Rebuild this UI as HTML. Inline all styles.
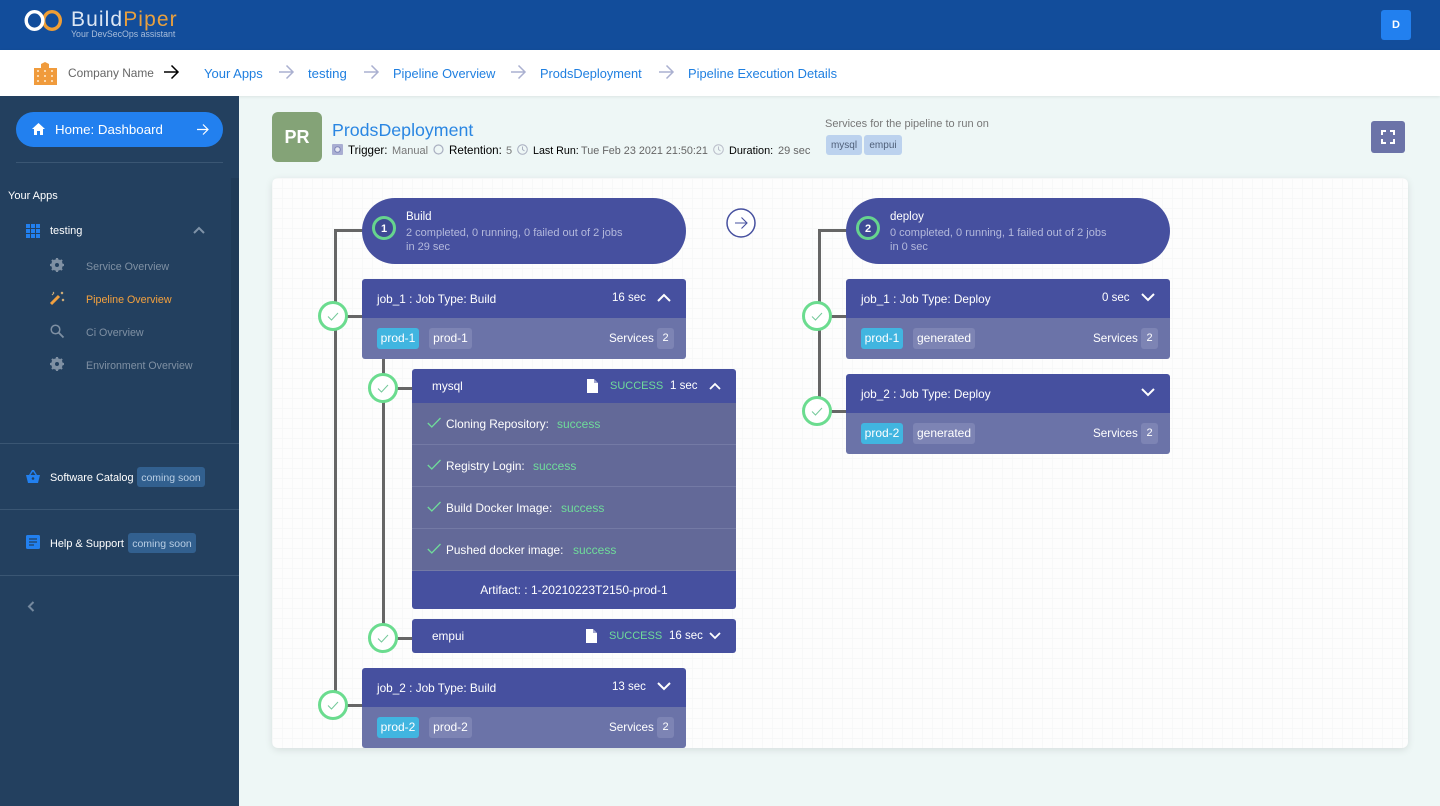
<!DOCTYPE html>
<html>
<head>
<meta charset="utf-8">
<title>BuildPiper</title>
<style>
*{box-sizing:border-box;margin:0;padding:0}
html,body{width:1440px;height:806px;overflow:hidden;background:#eef7f6;font-family:"Liberation Sans",sans-serif;font-size:12px;color:#000}
.a{position:absolute;white-space:nowrap}
svg{position:absolute;overflow:visible}
.bl{color:#1f7fe0;font-size:12.8px}
.nv{background:#46509f;position:absolute}
.lt{background:#6b73a8;position:absolute}
.w{color:#fff}
.tag{position:absolute;height:21px;line-height:21px;border-radius:3px;color:#fff;font-size:12px;text-align:center}
.line{position:absolute;background:#666}
.succ{color:#6fdc9a}
</style>
</head>
<body>
<!-- top bar -->
<div class="a" style="left:0;top:0;width:1440px;height:50px;background:#124d9b"></div>
<svg style="left:24px;top:10px" width="38" height="21" viewBox="0 0 38 21"><ellipse cx="28" cy="10.500" rx="8.300" ry="8.800" fill="none" stroke="#ef9e35" stroke-width="3.400"/><ellipse cx="10.500" cy="10.500" rx="8.300" ry="8.800" fill="none" stroke="#fff" stroke-width="3.400"/></svg>
<div class="a" style="left:71px;top:8px;font-size:21px;line-height:24px;color:#dbe6f3;letter-spacing:1.100px">Build<span style="color:#e8a03f">Piper</span></div>
<div class="a" style="left:71px;top:29px;font-size:8.800px;line-height:11px;color:#a9bedb">Your DevSecOps assistant</div>
<div class="a" style="left:1381px;top:10px;width:30px;height:30px;background:#2280ef;border-radius:3px;color:#fff;font-weight:bold;font-size:11px;line-height:31px;text-align:center">D</div>

<!-- breadcrumb -->
<div class="a" style="left:0;top:50px;width:1440px;height:46px;background:#fff;box-shadow:0 1px 3px rgba(0,0,0,.08)"></div>
<svg style="left:34px;top:62px" width="23" height="23" viewBox="0 0 23 23"><path fill="#f09b3c" d="M0 6h7V2l4-2 4 2v4h8v17H0z"/><g fill="#fcd9ad"><rect x="3" y="8" width="2" height="2"/><rect x="10" y="8" width="2" height="2"/><rect x="17" y="8" width="2" height="2"/><rect x="3" y="13" width="2" height="2"/><rect x="10" y="13" width="2" height="2"/><rect x="17" y="13" width="2" height="2"/><rect x="3" y="18" width="2" height="2"/><rect x="10" y="18" width="2" height="2"/><rect x="17" y="18" width="2" height="2"/></g></svg>
<div class="a" style="left:68px;top:66px;font-size:11.900px;line-height:15px;color:#666">Company Name</div>
<svg style="left:163px;top:64px" width="16" height="16" viewBox="0 0 16 16"><path d="M1 8h14M8.500 1.500 15 8l-6.500 6.500" fill="none" stroke="#000" stroke-width="1.500"/></svg>
<div class="a bl" style="left:204px;top:66px;line-height:15px;font-size:13px">Your Apps</div>
<svg style="left:278px;top:64px" width="16" height="16" viewBox="0 0 16 16"><path d="M1 8h14M8.500 1.500 15 8l-6.500 6.500" fill="none" stroke="#aab0d0" stroke-width="1.500"/></svg>
<div class="a bl" style="left:308px;top:66px;line-height:15px;font-size:13.200px">testing</div>
<svg style="left:363px;top:64px" width="16" height="16" viewBox="0 0 16 16"><path d="M1 8h14M8.500 1.500 15 8l-6.500 6.500" fill="none" stroke="#aab0d0" stroke-width="1.500"/></svg>
<div class="a bl" style="left:393px;top:66px;line-height:15px;font-size:12.800px">Pipeline Overview</div>
<svg style="left:510px;top:64px" width="16" height="16" viewBox="0 0 16 16"><path d="M1 8h14M8.500 1.500 15 8l-6.500 6.500" fill="none" stroke="#aab0d0" stroke-width="1.500"/></svg>
<div class="a bl" style="left:540px;top:66px;line-height:15px;font-size:12.800px">ProdsDeployment</div>
<svg style="left:658px;top:64px" width="16" height="16" viewBox="0 0 16 16"><path d="M1 8h14M8.500 1.500 15 8l-6.500 6.500" fill="none" stroke="#aab0d0" stroke-width="1.500"/></svg>
<div class="a bl" style="left:688px;top:66px;line-height:15px;font-size:12.900px">Pipeline Execution Details</div>

<!-- sidebar -->
<div class="a" style="left:0;top:96px;width:239px;height:710px;background:#23405f"></div>
<div class="a" style="left:231px;top:178px;width:8px;height:252px;background:#203b58"></div>
<div class="a" style="left:16px;top:112px;width:207px;height:35px;background:#2280ef;border-radius:18px"></div>
<svg style="left:31px;top:122px" width="15" height="14" viewBox="0 0 15 14"><path fill="#fff" d="M7.500 1 14 7h-2v6H9V9H6v4H3V7H1z"/></svg>
<div class="a w" style="left:55px;top:122px;font-size:13.300px;line-height:15px">Home: Dashboard</div>
<svg style="left:196px;top:123px" width="13" height="13" viewBox="0 0 13 13"><path d="M1 6.500h11M7 1.500l5 5-5 5" fill="none" stroke="#fff" stroke-width="1.200"/></svg>
<div class="a" style="left:16px;top:162px;width:207px;height:1px;background:#3a5673"></div>
<div class="a w" style="left:8px;top:190px;font-size:11px;line-height:13px">Your Apps</div>
<svg style="left:26px;top:224px" width="14" height="14" viewBox="0 0 14 14" fill="#2280ef"><rect width="4" height="4"/><rect x="5" width="4" height="4"/><rect x="10" width="4" height="4"/><rect y="5" width="4" height="4"/><rect x="5" y="5" width="4" height="4"/><rect x="10" y="5" width="4" height="4"/><rect y="10" width="4" height="4"/><rect x="5" y="10" width="4" height="4"/><rect x="10" y="10" width="4" height="4"/></svg>
<div class="a w" style="left:50px;top:225px;font-size:11px;line-height:13px">testing</div>
<svg style="left:193px;top:226px" width="12" height="8" viewBox="0 0 12 8"><path d="M1 7l5-5 5 5" fill="none" stroke="#7f93a8" stroke-width="2"/></svg>
<svg style="left:50px;top:258px" width="14" height="14" viewBox="0 0 14 14"><circle cx="7" cy="7" r="4.200" fill="none" stroke="#7f90a3" stroke-width="3.200"/><path d="M7 0v14M0 7h14M2 2l10 10M12 2 2 12" stroke="#7f90a3" stroke-width="2.200"/><circle cx="7" cy="7" r="2" fill="#23405f"/></svg>
<div class="a" style="left:86px;top:261px;font-size:10.700px;line-height:13px;color:#7f90a3">Service Overview</div>
<svg style="left:50px;top:291px" width="14" height="14" viewBox="0 0 14 14"><path d="M1 13 9 5" stroke="#f0a040" stroke-width="3"/><path d="M3 1l1 1M11 1l2 2M13 1l-2 2M2 4l2-2M12 8l2 2M14 8l-2 2" stroke="#d8b27a" stroke-width="1"/></svg>
<div class="a" style="left:86px;top:294px;font-size:10.700px;line-height:13px;color:#f4a13e">Pipeline Overview</div>
<svg style="left:50px;top:324px" width="14" height="14" viewBox="0 0 14 14"><circle cx="5.500" cy="5.500" r="4.300" fill="none" stroke="#7f90a3" stroke-width="1.500"/><path d="M8.800 8.800 13.500 13.500" stroke="#7f90a3" stroke-width="1.800"/></svg>
<div class="a" style="left:86px;top:327px;font-size:10.700px;line-height:13px;color:#7f90a3">Ci Overview</div>
<svg style="left:50px;top:357px" width="14" height="14" viewBox="0 0 14 14"><circle cx="7" cy="7" r="4.200" fill="none" stroke="#7f90a3" stroke-width="3.200"/><path d="M7 0v14M0 7h14M2 2l10 10M12 2 2 12" stroke="#7f90a3" stroke-width="2.200"/><circle cx="7" cy="7" r="2" fill="#23405f"/></svg>
<div class="a" style="left:86px;top:360px;font-size:10.600px;line-height:13px;color:#7f90a3">Environment Overview</div>
<div class="a" style="left:0;top:443px;width:239px;height:1px;background:#3a5673"></div>
<svg style="left:26px;top:470px" width="14" height="13" viewBox="0 0 14 13"><path fill="#2280ef" d="M0 5h3l3-5h2l3 5h3l-2 8H2z"/><path fill="#23405f" d="M4.500 5 7 1.500 9.500 5z"/><circle cx="7" cy="8.500" r="1.300" fill="#23405f"/></svg>
<div class="a w" style="left:50px;top:472px;font-size:10.900px;line-height:13px">Software Catalog</div>
<div class="a" style="left:137px;top:467px;width:68px;height:20px;line-height:22px;background:#32608f;border-radius:3px;color:#b9cee4;font-size:10.500px;text-align:center">coming soon</div>
<div class="a" style="left:0;top:509px;width:239px;height:1px;background:#3a5673"></div>
<svg style="left:26px;top:535px" width="14" height="14" viewBox="0 0 14 14"><rect width="14" height="14" rx="1.500" fill="#2280ef"/><path d="M3 4h8M3 7h8M3 10h5" stroke="#23405f" stroke-width="1.200"/></svg>
<div class="a w" style="left:50px;top:538px;font-size:10.900px;line-height:13px">Help &amp; Support</div>
<div class="a" style="left:128px;top:533px;width:68px;height:20px;line-height:22px;background:#32608f;border-radius:3px;color:#b9cee4;font-size:10.500px;text-align:center">coming soon</div>
<div class="a" style="left:0;top:575px;width:239px;height:1px;background:#3a5673"></div>
<svg style="left:27px;top:601px" width="8" height="11" viewBox="0 0 8 11"><path d="M6.500 1 2 5.500 6.500 10" fill="none" stroke="#75899e" stroke-width="2"/></svg>

<!-- page header -->
<div class="a" style="left:272px;top:112px;width:50px;height:50px;border-radius:6px;background:#84a377;color:#fff;font-weight:bold;font-size:18px;line-height:50px;text-align:center">PR</div>
<div class="a" style="left:332px;top:119px;font-size:17.800px;line-height:22px;color:#2a86e2">ProdsDeployment</div>
<svg style="left:332px;top:144px" width="11" height="11" viewBox="0 0 11 11"><rect width="11" height="11" rx="1" fill="#a9aed2"/><circle cx="5.500" cy="5.500" r="2.800" fill="#e6e8f2" stroke="#7e86b8"/></svg>
<div class="a" style="left:348px;top:144px;font-size:11.600px;line-height:14px">Trigger:</div>
<div class="a" style="left:392px;top:144px;font-size:11px;line-height:14px;color:#777">Manual</div>
<svg style="left:433px;top:144px" width="11" height="11" viewBox="0 0 11 11"><circle cx="5.500" cy="5.500" r="4.500" fill="none" stroke="#a9afc0" stroke-width="1.200"/></svg>
<div class="a" style="left:449px;top:144px;font-size:11.600px;line-height:14px">Retention:</div>
<div class="a" style="left:506px;top:144px;font-size:11px;line-height:14px;color:#777">5</div>
<svg style="left:517px;top:144px" width="11" height="11" viewBox="0 0 11 11"><circle cx="5.500" cy="5.500" r="4.800" fill="none" stroke="#a9afc0"/><path d="M5.500 2.500v3l2 1.500" fill="none" stroke="#a9afc0"/></svg>
<div class="a" style="left:533px;top:144px;font-size:10.700px;line-height:14px">Last Run:</div>
<div class="a" style="left:581px;top:144px;font-size:10.800px;line-height:14px;color:#666">Tue Feb 23 2021 21:50:21</div>
<svg style="left:713px;top:144px" width="11" height="11" viewBox="0 0 11 11"><circle cx="5.500" cy="5.500" r="4.800" fill="none" stroke="#b9bdc9"/><path d="M5.500 2.500v3l2 1.500" fill="none" stroke="#b9bdc9"/></svg>
<div class="a" style="left:729px;top:144px;font-size:10.900px;line-height:14px">Duration:</div>
<div class="a" style="left:778px;top:144px;font-size:11px;line-height:14px;color:#666">29 sec</div>
<div class="a" style="left:825px;top:118px;font-size:11px;line-height:13px;color:#777">Services for the pipeline to run on</div>
<div class="a" style="left:826px;top:135px;width:36px;height:20px;line-height:22px;background:#bcd2ee;border-radius:3px;color:#50607a;font-size:10px;text-align:center">mysql</div>
<div class="a" style="left:864px;top:135px;width:38px;height:20px;line-height:22px;background:#bcd2ee;border-radius:3px;color:#50607a;font-size:10px;text-align:center">empui</div>
<div class="a" style="left:1371px;top:121px;width:34px;height:32px;background:#6b73a8;border-radius:3px"></div>
<svg style="left:1381px;top:130px" width="14" height="14" viewBox="0 0 14 14"><path d="M1 5V1h4M9 1h4v4M13 9v4H9M5 13H1V9" fill="none" stroke="#fff" stroke-width="2"/></svg>

<!-- canvas card -->
<div class="a" style="left:272px;top:178px;width:1136px;height:570px;border-radius:6px;background-color:#fdfdfd;background-image:linear-gradient(#f7f8f8 1px,transparent 1px),linear-gradient(90deg,#f7f8f8 1px,transparent 1px);background-size:10px 10px;box-shadow:0 2px 8px rgba(0,0,0,.1)"></div>

<!-- connector lines -->
<div class="line" style="left:334px;top:229px;width:3px;height:477px"></div>
<div class="line" style="left:334px;top:229px;width:30px;height:3px"></div>
<div class="line" style="left:347px;top:315px;width:16px;height:3px"></div>
<div class="line" style="left:347px;top:704px;width:16px;height:3px"></div>
<div class="line" style="left:382px;top:358px;width:3px;height:280px"></div>
<div class="line" style="left:397px;top:387px;width:16px;height:3px"></div>
<div class="line" style="left:397px;top:637px;width:16px;height:3px"></div>
<div class="line" style="left:818px;top:229px;width:3px;height:182px"></div>
<div class="line" style="left:818px;top:229px;width:30px;height:3px"></div>
<div class="line" style="left:831px;top:315px;width:16px;height:3px"></div>
<div class="line" style="left:831px;top:410px;width:16px;height:3px"></div>

<!-- check circles -->
<svg style="left:318px;top:301px" width="30" height="30" viewBox="0 0 30 30"><circle cx="15" cy="15" r="13.500" fill="#fff" stroke="#6bdc8f" stroke-width="3"/><path d="M10 15.500l3.500 3.500 6.500-7" fill="none" stroke="#74c99a" stroke-width="1"/></svg>
<svg style="left:318px;top:690px" width="30" height="30" viewBox="0 0 30 30"><circle cx="15" cy="15" r="13.500" fill="#fff" stroke="#6bdc8f" stroke-width="3"/><path d="M10 15.500l3.500 3.500 6.500-7" fill="none" stroke="#74c99a" stroke-width="1"/></svg>
<svg style="left:368px;top:373px" width="30" height="30" viewBox="0 0 30 30"><circle cx="15" cy="15" r="13.500" fill="#fff" stroke="#6bdc8f" stroke-width="3"/><path d="M10 15.500l3.500 3.500 6.500-7" fill="none" stroke="#74c99a" stroke-width="1"/></svg>
<svg style="left:368px;top:623px" width="30" height="30" viewBox="0 0 30 30"><circle cx="15" cy="15" r="13.500" fill="#fff" stroke="#6bdc8f" stroke-width="3"/><path d="M10 15.500l3.500 3.500 6.500-7" fill="none" stroke="#74c99a" stroke-width="1"/></svg>
<svg style="left:802px;top:301px" width="30" height="30" viewBox="0 0 30 30"><circle cx="15" cy="15" r="13.500" fill="#fff" stroke="#6bdc8f" stroke-width="3"/><path d="M10 15.500l3.500 3.500 6.500-7" fill="none" stroke="#74c99a" stroke-width="1"/></svg>
<svg style="left:802px;top:396px" width="30" height="30" viewBox="0 0 30 30"><circle cx="15" cy="15" r="13.500" fill="#fff" stroke="#6bdc8f" stroke-width="3"/><path d="M10 15.500l3.500 3.500 6.500-7" fill="none" stroke="#74c99a" stroke-width="1"/></svg>

<!-- stage 1 -->
<div class="nv" style="left:362px;top:198px;width:324px;height:66px;border-radius:33px"></div>
<svg style="left:372px;top:216px" width="24" height="24" viewBox="0 0 24 24"><circle cx="12" cy="12" r="10.500" fill="#3f4a95" stroke="#66d48e" stroke-width="3"/><text x="12" y="16" text-anchor="middle" font-family="Liberation Sans" font-weight="bold" font-size="11" fill="#fff">1</text></svg>
<div class="a w" style="left:406px;top:210px;font-size:11.500px;line-height:15px">Build</div>
<div class="a" style="left:406px;top:226px;font-size:11px;line-height:14px;color:#b4b9dc">2 completed, 0 running, 0 failed out of 2 jobs</div>
<div class="a" style="left:406px;top:240px;font-size:11px;line-height:14px;color:#b4b9dc">in 29 sec</div>

<svg style="left:726px;top:208px" width="30" height="30" viewBox="0 0 30 30"><circle cx="15" cy="15" r="14" fill="#fff" stroke="#46509f" stroke-width="1.500"/><path d="M9 15h12M15.500 9.500 21 15l-5.500 5.500" fill="none" stroke="#46509f" stroke-width="1.100"/></svg>

<!-- stage 2 -->
<div class="nv" style="left:846px;top:198px;width:324px;height:66px;border-radius:33px"></div>
<svg style="left:856px;top:216px" width="24" height="24" viewBox="0 0 24 24"><circle cx="12" cy="12" r="10.500" fill="#3f4a95" stroke="#66d48e" stroke-width="3"/><text x="12" y="16" text-anchor="middle" font-family="Liberation Sans" font-weight="bold" font-size="11" fill="#fff">2</text></svg>
<div class="a w" style="left:890px;top:210px;font-size:11.500px;line-height:15px">deploy</div>
<div class="a" style="left:890px;top:226px;font-size:11px;line-height:14px;color:#b4b9dc">0 completed, 0 running, 1 failed out of 2 jobs</div>
<div class="a" style="left:890px;top:240px;font-size:11px;line-height:14px;color:#b4b9dc">in 0 sec</div>

<!-- job_1 Build -->
<div class="nv" style="left:362px;top:279px;width:324px;height:40px;border-radius:3px 3px 0 0"></div>
<div class="lt" style="left:362px;top:318px;width:324px;height:41px;border-radius:0 0 3px 3px"></div>
<div class="a w" style="left:377px;top:292px;font-size:11.800px;line-height:15px">job_1 : Job Type: Build</div>
<div class="a w" style="left:612px;top:291px;font-size:11.500px;line-height:15px">16 sec</div>
<svg style="left:657px;top:293px" width="14" height="9" viewBox="0 0 14 9"><path d="M1 8l6-6 6 6" fill="none" stroke="#fff" stroke-width="2"/></svg>
<div class="tag" style="left:377px;top:328px;width:42px;background:#41b5e0">prod-1</div>
<div class="tag" style="left:429px;top:328px;width:43px;background:#7d84b4">prod-1</div>
<div class="a w" style="left:609px;top:331px;font-size:11.700px;line-height:15px">Services</div>
<div class="tag" style="left:657px;top:328px;width:17px;background:#7d84b4;font-size:11px">2</div>

<!-- mysql -->
<div class="nv" style="left:412px;top:369px;width:324px;height:35px;border-radius:3px 3px 0 0"></div>
<div class="a" style="left:412px;top:403px;width:324px;height:168px;background:#636998"></div>
<div class="a" style="left:412px;top:444px;width:324px;height:1px;background:#747aa5"></div>
<div class="a" style="left:412px;top:486px;width:324px;height:1px;background:#747aa5"></div>
<div class="a" style="left:412px;top:528px;width:324px;height:1px;background:#747aa5"></div>
<div class="a" style="left:412px;top:570px;width:324px;height:1px;background:#747aa5"></div>
<div class="nv" style="left:412px;top:571px;width:324px;height:38px;border-radius:0 0 3px 3px"></div>
<div class="a w" style="left:432px;top:379px;font-size:11.800px;line-height:15px">mysql</div>
<svg style="left:586px;top:379px" width="12" height="14" viewBox="0 0 12 14"><path fill="#fff" d="M1 0h7l4 4v10H1z"/><path fill="#46509f" d="M8 0v4h4z" opacity=".5"/></svg>
<div class="a succ" style="left:610px;top:379px;font-size:11px;line-height:15px">SUCCESS</div>
<div class="a w" style="left:670px;top:379px;font-size:11.500px;line-height:15px">1 sec</div>
<svg style="left:709px;top:382px" width="12" height="8" viewBox="0 0 12 8"><path d="M1 7l5-5 5 5" fill="none" stroke="#fff" stroke-width="1.800"/></svg>

<svg style="left:427px;top:417px" width="14" height="11" viewBox="0 0 14 11"><path d="M.8 6l4 4L13.500 1" fill="none" stroke="#6fdc9a" stroke-width="1.300"/></svg>
<div class="a w" style="left:446px;top:417px;font-size:11.800px;line-height:15px">Cloning Repository:</div>
<div class="a succ" style="left:557px;top:417px;font-size:12px;line-height:15px">success</div>
<svg style="left:427px;top:459px" width="14" height="11" viewBox="0 0 14 11"><path d="M.8 6l4 4L13.500 1" fill="none" stroke="#6fdc9a" stroke-width="1.300"/></svg>
<div class="a w" style="left:446px;top:459px;font-size:11.800px;line-height:15px">Registry Login:</div>
<div class="a succ" style="left:533px;top:459px;font-size:12px;line-height:15px">success</div>
<svg style="left:427px;top:501px" width="14" height="11" viewBox="0 0 14 11"><path d="M.8 6l4 4L13.500 1" fill="none" stroke="#6fdc9a" stroke-width="1.300"/></svg>
<div class="a w" style="left:446px;top:501px;font-size:11.800px;line-height:15px">Build Docker Image:</div>
<div class="a succ" style="left:561px;top:501px;font-size:12px;line-height:15px">success</div>
<svg style="left:427px;top:543px" width="14" height="11" viewBox="0 0 14 11"><path d="M.8 6l4 4L13.500 1" fill="none" stroke="#6fdc9a" stroke-width="1.300"/></svg>
<div class="a w" style="left:446px;top:543px;font-size:11.800px;line-height:15px">Pushed docker image:</div>
<div class="a succ" style="left:573px;top:543px;font-size:12px;line-height:15px">success</div>
<div class="a w" style="left:412px;top:583px;width:324px;text-align:center;font-size:12px;line-height:15px">Artifact: : 1-20210223T2150-prod-1</div>

<!-- empui -->
<div class="nv" style="left:412px;top:619px;width:324px;height:34px;border-radius:3px"></div>
<div class="a w" style="left:432px;top:629px;font-size:11.800px;line-height:15px">empui</div>
<svg style="left:585px;top:629px" width="12" height="14" viewBox="0 0 12 14"><path fill="#fff" d="M1 0h7l4 4v10H1z"/><path fill="#46509f" d="M8 0v4h4z" opacity=".5"/></svg>
<div class="a succ" style="left:609px;top:629px;font-size:11px;line-height:15px">SUCCESS</div>
<div class="a w" style="left:669px;top:629px;font-size:11.500px;line-height:15px">16 sec</div>
<svg style="left:709px;top:632px" width="12" height="8" viewBox="0 0 12 8"><path d="M1 1l5 5 5-5" fill="none" stroke="#fff" stroke-width="1.800"/></svg>

<!-- job_2 Build -->
<div class="nv" style="left:362px;top:668px;width:324px;height:40px;border-radius:3px 3px 0 0"></div>
<div class="lt" style="left:362px;top:707px;width:324px;height:41px;border-radius:0 0 3px 3px"></div>
<div class="a w" style="left:377px;top:681px;font-size:11.800px;line-height:15px">job_2 : Job Type: Build</div>
<div class="a w" style="left:612px;top:680px;font-size:11.500px;line-height:15px">13 sec</div>
<svg style="left:657px;top:682px" width="14" height="9" viewBox="0 0 14 9"><path d="M1 1l6 6 6-6" fill="none" stroke="#fff" stroke-width="2"/></svg>
<div class="tag" style="left:377px;top:717px;width:42px;background:#41b5e0">prod-2</div>
<div class="tag" style="left:429px;top:717px;width:43px;background:#7d84b4">prod-2</div>
<div class="a w" style="left:609px;top:720px;font-size:11.700px;line-height:15px">Services</div>
<div class="tag" style="left:657px;top:717px;width:17px;background:#7d84b4;font-size:11px">2</div>

<!-- job_1 Deploy -->
<div class="nv" style="left:846px;top:279px;width:324px;height:40px;border-radius:3px 3px 0 0"></div>
<div class="lt" style="left:846px;top:318px;width:324px;height:41px;border-radius:0 0 3px 3px"></div>
<div class="a w" style="left:861px;top:292px;font-size:11.800px;line-height:15px">job_1 : Job Type: Deploy</div>
<div class="a w" style="left:1102px;top:291px;font-size:11.500px;line-height:15px">0 sec</div>
<svg style="left:1141px;top:293px" width="14" height="9" viewBox="0 0 14 9"><path d="M1 1l6 6 6-6" fill="none" stroke="#fff" stroke-width="2"/></svg>
<div class="tag" style="left:861px;top:328px;width:42px;background:#41b5e0">prod-1</div>
<div class="tag" style="left:913px;top:328px;width:62px;background:#7d84b4">generated</div>
<div class="a w" style="left:1093px;top:331px;font-size:11.700px;line-height:15px">Services</div>
<div class="tag" style="left:1141px;top:328px;width:17px;background:#7d84b4;font-size:11px">2</div>

<!-- job_2 Deploy -->
<div class="nv" style="left:846px;top:374px;width:324px;height:40px;border-radius:3px 3px 0 0"></div>
<div class="lt" style="left:846px;top:413px;width:324px;height:41px;border-radius:0 0 3px 3px"></div>
<div class="a w" style="left:861px;top:387px;font-size:11.800px;line-height:15px">job_2 : Job Type: Deploy</div>
<svg style="left:1141px;top:388px" width="14" height="9" viewBox="0 0 14 9"><path d="M1 1l6 6 6-6" fill="none" stroke="#fff" stroke-width="2"/></svg>
<div class="tag" style="left:861px;top:423px;width:42px;background:#41b5e0">prod-2</div>
<div class="tag" style="left:913px;top:423px;width:62px;background:#7d84b4">generated</div>
<div class="a w" style="left:1093px;top:426px;font-size:11.700px;line-height:15px">Services</div>
<div class="tag" style="left:1141px;top:423px;width:17px;background:#7d84b4;font-size:11px">2</div>
</body>
</html>
